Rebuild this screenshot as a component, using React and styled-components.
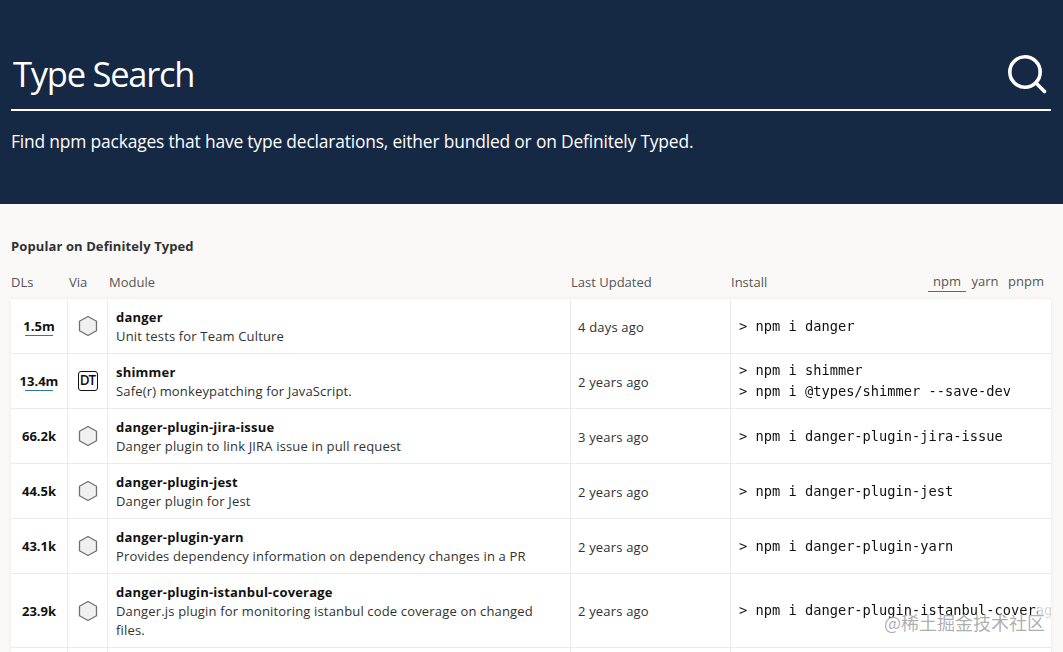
import React from 'react';
import styled, { createGlobalStyle } from 'styled-components';

const packages = [
  { dls: '1.5m', under: true, via: 'npm', name: 'danger', desc: 'Unit tests for Team Culture', updated: '4 days ago', cmds: ['> npm i danger'] },
  { dls: '13.4m', under: true, via: 'dt', name: 'shimmer', desc: 'Safe(r) monkeypatching for JavaScript.', updated: '2 years ago', cmds: ['> npm i shimmer', '> npm i @types/shimmer --save-dev'] },
  { dls: '66.2k', via: 'npm', name: 'danger-plugin-jira-issue', desc: 'Danger plugin to link JIRA issue in pull request', updated: '3 years ago', cmds: ['> npm i danger-plugin-jira-issue'] },
  { dls: '44.5k', via: 'npm', name: 'danger-plugin-jest', desc: 'Danger plugin for Jest', updated: '2 years ago', cmds: ['> npm i danger-plugin-jest'] },
  { dls: '43.1k', via: 'npm', name: 'danger-plugin-yarn', desc: 'Provides dependency information on dependency changes in a PR', updated: '2 years ago', cmds: ['> npm i danger-plugin-yarn'] },
  { dls: '23.9k', via: 'npm', name: 'danger-plugin-istanbul-coverage', desc: 'Danger.js plugin for monitoring istanbul code coverage on changed files.', updated: '2 years ago', cmds: ['> npm i danger-plugin-istanbul-coverage'], tall: true },
];

const Global = createGlobalStyle`
  html, body { margin: 0; padding: 0; height: 100%; overflow: hidden; background: #faf9f8; }
  body { font-family: "Open Sans", "Noto Sans", "Liberation Sans", sans-serif; color: #323130; }
`;

const Page = styled.div`
  position: relative;
  width: 1063px;
  height: 652px;
  overflow: hidden;
`;

const Hero = styled.header`
  height: 204px;
  background: #152844;
  color: #fff;
  padding: 50px 12px 0 11px;
  box-sizing: border-box;
`;

const SearchBar = styled.div`
  display: flex;
  align-items: center;
  justify-content: space-between;
  height: 48px;
  padding-bottom: 11px;
  border-bottom: 2px solid #fff;
`;

const Title = styled.h1`
  margin: 0 0 0 2px;
  font-size: 34.5px;
  font-weight: 400;
  letter-spacing: -1.25px;
  line-height: 50px;
`;

const Blurb = styled.p`
  margin: 18px 0 0;
  font-size: 17.4px;
  letter-spacing: -0.17px;
  line-height: 24px;
  color: #fff;
`;

const Content = styled.main`
  padding: 32px 12px 0 11px;
`;

const Heading = styled.h2`
  margin: 0;
  font-size: 13px;
  font-weight: 700;
  line-height: 20px;
  color: #323130;
  letter-spacing: 0.1px;
`;

const Columns = styled.div`
  display: grid;
  grid-template-columns: 57px 40px 463px 160px 1fr;
  height: 26px;
  margin: 13px 0 4px;
  align-items: center;
  font-size: 13px;
  color: #555;
`;

const ColumnLabel = styled.div`
  padding-left: ${p => p.$pad || 0}px;
  padding-bottom: 1px;
`;

const InstallHead = styled.div`
  display: flex;
  justify-content: space-between;
  align-items: center;
`;

const Managers = styled.div`
  display: flex;
  margin-right: 3px;
`;

const Manager = styled.span`
  width: ${p => p.$w}px;
  text-align: center;
  line-height: 19px;
  border-bottom: 1px solid ${p => (p.$active ? '#2f6fc4' : 'transparent')};
`;

const Table = styled.div`
  background: #fff;
  box-shadow: 0 0 3px rgba(0, 0, 0, 0.08);
`;

const Row = styled.div`
  display: grid;
  grid-template-columns: 57px 40px 463px 160px 1fr;
  height: ${p => (p.$tall ? 73 : 54)}px;
  border-bottom: 1px solid #edebe9;
`;

const Cell = styled.div`
  display: flex;
  align-items: center;
  min-width: 0;
  overflow: hidden;
  border-right: 1px solid #edebe9;
`;

const DlCell = styled(Cell)`
  justify-content: center;
  font-size: 13px;
  font-weight: 700;
  color: #111;
`;

const Dl = styled.span`
  display: inline-block;
  position: relative;
  &::after {
    content: '';
    display: ${p => (p.$under ? 'block' : 'none')};
    position: absolute;
    left: 50%;
    bottom: -1px;
    width: 28px;
    margin-left: -14px;
    border-bottom: 1px solid #2b7a9e;
  }
`;

const ViaCell = styled(Cell)`
  justify-content: center;
`;

const DtBadge = styled.span`
  box-sizing: border-box;
  width: 20px;
  height: 20px;
  border: 1.3px solid #111;
  border-radius: 3px;
  font-size: 13.5px;
  font-weight: 600;
  line-height: 17px;
  text-align: center;
  letter-spacing: -0.9px;
  color: #111;
`;

const ModuleCell = styled(Cell)`
  display: block;
  padding: 9px 30px 0 8px;
`;

const Name = styled.div`
  font-size: 13px;
  font-weight: 700;
  line-height: 19px;
  color: #111;
  letter-spacing: 0.2px;
`;

const Desc = styled.div`
  font-size: 13px;
  line-height: 19px;
  color: #323130;
  letter-spacing: 0.16px;
`;

const UpdatedCell = styled(Cell)`
  padding: 1px 0 0 7px;
  font-size: 13px;
  letter-spacing: 0.18px;
  color: #323130;
`;

const InstallCell = styled.div`
  display: flex;
  flex-direction: column;
  justify-content: center;
  min-width: 0;
  padding-left: 8px;
  overflow: hidden;
`;

const Command = styled.code`
  display: block;
  font-family: "DejaVu Sans Mono", "Liberation Mono", monospace;
  font-size: 13.7px;
  line-height: 21px;
  color: #111;
  white-space: nowrap;
  mask-image: linear-gradient(to right, #000 296px, rgba(0, 0, 0, 0.18) 300px);
`;

const Watermark = styled.div`
  position: absolute;
  right: 18px;
  bottom: 18px;
  font-family: "Noto Sans CJK SC", sans-serif;
  font-size: 18px;
  line-height: 24px;
  color: rgba(120, 120, 120, 0.6);
  text-shadow: 0 0 1px rgba(255, 255, 255, 0.8);
`;

function SearchIcon() {
  return (
    <svg width="42" height="42" viewBox="0 0 42 42" fill="none" stroke="#fff" strokeWidth="3.6" strokeLinecap="round" style={{ marginRight: 3 }}>
      <circle cx="19" cy="19" r="15.2" />
      <path d="M30 30 L38.5 38.5" />
    </svg>
  );
}

function Hexagon() {
  return (
    <svg width="20" height="22" viewBox="0 0 20 22">
      <path d="M10 1.5 L18.5 6.2 V15.8 L10 20.5 L1.5 15.8 V6.2 Z" fill="#f0f0f0" stroke="#6f6f6f" strokeWidth="1.3" strokeLinejoin="round" />
    </svg>
  );
}

export default function App() {
  return (
    <Page>
      <Global />
      <Hero>
        <SearchBar>
          <Title>Type Search</Title>
          <SearchIcon />
        </SearchBar>
        <Blurb>Find npm packages that have type declarations, either bundled or on Definitely Typed.</Blurb>
      </Hero>
      <Content>
        <Heading>Popular on Definitely Typed</Heading>
        <Columns>
          <ColumnLabel>DLs</ColumnLabel>
          <ColumnLabel $pad={1}>Via</ColumnLabel>
          <ColumnLabel $pad={1}>Module</ColumnLabel>
          <ColumnLabel>Last Updated</ColumnLabel>
          <InstallHead>
            <span>Install</span>
            <Managers>
              <Manager $w={38} $active>npm</Manager>
              <Manager $w={38}>yarn</Manager>
              <Manager $w={44}>pnpm</Manager>
            </Managers>
          </InstallHead>
        </Columns>
        <Table>
          {packages.map(pkg => (
            <Row key={pkg.name} $tall={pkg.tall}>
              <DlCell><Dl $under={pkg.under}>{pkg.dls}</Dl></DlCell>
              <ViaCell>{pkg.via === 'dt' ? <DtBadge>DT</DtBadge> : <Hexagon />}</ViaCell>
              <ModuleCell>
                <Name>{pkg.name}</Name>
                <Desc>{pkg.desc}</Desc>
              </ModuleCell>
              <UpdatedCell>{pkg.updated}</UpdatedCell>
              <InstallCell>
                {pkg.cmds.map(cmd => <Command key={cmd}>{cmd}</Command>)}
              </InstallCell>
            </Row>
          ))}
          <Row>
            <Cell />
            <Cell />
            <Cell />
            <Cell />
          </Row>
        </Table>
      </Content>
      <Watermark>@稀土掘金技术社区</Watermark>
    </Page>
  );
}
